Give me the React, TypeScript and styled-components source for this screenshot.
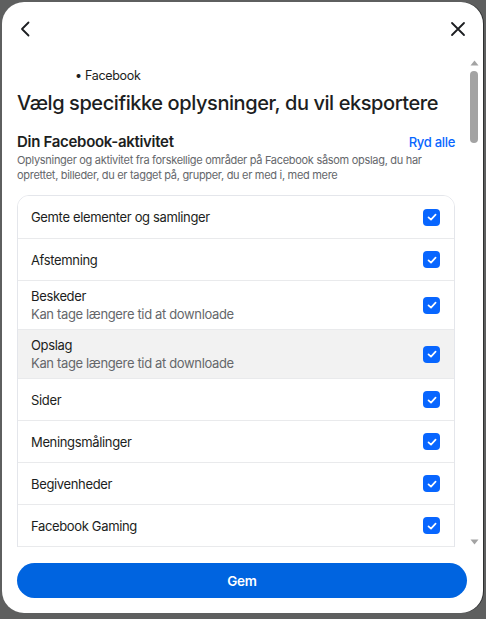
import styled, {createGlobalStyle} from "styled-components";

const GlobalStyle = createGlobalStyle`
  html, body {
    margin: 0;
    padding: 0;
    background: #5e5f5f;
  }
  body {
    font-family: Inter, "Noto Sans", sans-serif;
    -webkit-font-smoothing: antialiased;
  }
`;

type Category = {
  title: string;
  note?: string;
  hovered?: boolean;
};

const CATEGORIES: Category[] = [
  {title: "Gemte elementer og samlinger"},
  {title: "Afstemning"},
  {title: "Beskeder", note: "Kan tage længere tid at downloade"},
  {title: "Opslag", note: "Kan tage længere tid at downloade", hovered: true},
  {title: "Sider"},
  {title: "Meningsmålinger"},
  {title: "Begivenheder"},
  {title: "Facebook Gaming"},
  {title: "Grupper"},
];

function ChevronLeft() {
  return (
    <svg width="20" height="20" viewBox="0 0 20 20" fill="none">
      <path d="M12.5 3.5 6 10l6.5 6.5" stroke="#1c1e21" strokeWidth="1.8" strokeLinecap="round" strokeLinejoin="round"/>
    </svg>
  );
}

function CloseIcon() {
  return (
    <svg width="20" height="20" viewBox="0 0 20 20" fill="none">
      <path d="M4 4l12 12M16 4 4 16" stroke="#1c1e21" strokeWidth="1.8" strokeLinecap="round"/>
    </svg>
  );
}

function CheckMark() {
  return (
    <svg width="12" height="12" viewBox="0 0 12 12" fill="none">
      <path d="M2.5 6.3 5 8.6l4.6-5" stroke="#fff" strokeWidth="1.7" strokeLinecap="round" strokeLinejoin="round"/>
    </svg>
  );
}

function RailArrow({down}: { down?: boolean }) {
  return (
    <svg width="9" height="6" viewBox="0 0 9 6">
      <path d={down ? "M0.5 0.5h8L4.5 5.5z" : "M0.5 5.5h8L4.5 0.5z"} fill="#a3a3a3"/>
    </svg>
  );
}

export default function App() {
  return (
    <>
      <GlobalStyle/>
      <Screen>
        <Dialog>
          <Header>
            <IconButton aria-label="Tilbage"><ChevronLeft/></IconButton>
            <IconButton aria-label="Luk"><CloseIcon/></IconButton>
          </Header>
          <ScrollArea>
            <Body>
              <Crumb>• Facebook</Crumb>
              <Title>Vælg specifikke oplysninger, du vil eksportere</Title>
              <SectionHead>
                <SectionTitle>Din Facebook-aktivitet</SectionTitle>
                <ClearLink>Ryd alle</ClearLink>
              </SectionHead>
              <SectionText>
                Oplysninger og aktivitet fra forskellige områder på Facebook såsom opslag, du har
                oprettet, billeder, du er tagget på, grupper, du er med i, med mere
              </SectionText>
              <Card>
                {CATEGORIES.map((item) =>
                  <Row key={item.title} $hovered={item.hovered}>
                    <RowText>
                      <RowTitle>{item.title}</RowTitle>
                      {item.note && <RowNote>{item.note}</RowNote>}
                    </RowText>
                    <Checkbox><CheckMark/></Checkbox>
                  </Row>
                )}
              </Card>
            </Body>
            <Rail>
              <RailArrow/>
              <RailTrack>
                <RailThumb/>
              </RailTrack>
              <RailArrow down/>
            </Rail>
          </ScrollArea>
          <Footer>
            <SaveButton>Gem</SaveButton>
          </Footer>
        </Dialog>
      </Screen>
    </>
  );
}

const Screen = styled.div`
  width: 486px;
  height: 619px;
  padding: 2px 3px 6px 2px;
  box-sizing: border-box;
  display: flex;
`;

const Dialog = styled.div`
  flex: 1;
  min-height: 0;
  background: #fff;
  border-radius: 22px;
  display: flex;
  flex-direction: column;
  overflow: hidden;
  box-shadow: 1px 0 0 #2e2f30;
`;

const Header = styled.div`
  height: 54px;
  flex-shrink: 0;
  display: flex;
  justify-content: space-between;
  align-items: center;
  padding: 0 13px 0 12px;
`;

const IconButton = styled.button`
  width: 24px;
  height: 24px;
  border: none;
  background: none;
  padding: 0;
  display: flex;
  align-items: center;
  justify-content: center;
`;

const ScrollArea = styled.div`
  flex: 1;
  min-height: 0;
  display: flex;
`;

const Body = styled.div`
  flex: 1;
  overflow-y: auto;
  padding: 12px 13px 0 15px;
  scrollbar-width: none;

  &::-webkit-scrollbar {
    display: none;
  }
`;

const Rail = styled.div`
  width: 12px;
  flex-shrink: 0;
  display: flex;
  flex-direction: column;
  align-items: center;
  padding: 4px 3px 2px 0;
  gap: 5px;
`;

const RailTrack = styled.div`
  flex: 1;
  width: 8px;
`;

const RailThumb = styled.div`
  width: 8px;
  height: 72px;
  border-radius: 4px;
  background: #a3a3a3;
`;

const Crumb = styled.div`
  padding-left: 58px;
  font-size: 12.5px;
  line-height: 16px;
  letter-spacing: -0.3px;
  color: #1c1e21;
`;

const Title = styled.h1`
  margin: 6px 0 0;
  font-size: 20px;
  line-height: 26px;
  font-weight: 500;
  color: #1c1e21;
  letter-spacing: -0.42px;
`;

const SectionHead = styled.div`
  margin-top: 16px;
  display: flex;
  justify-content: space-between;
  align-items: center;
`;

const SectionTitle = styled.h2`
  margin: 0;
  font-size: 15px;
  line-height: 20px;
  font-weight: 600;
  letter-spacing: -0.3px;
  color: #1c1e21;
`;

const ClearLink = styled.a`
  font-size: 13px;
  font-weight: 500;
  letter-spacing: -0.3px;
  color: #0866ff;
  cursor: pointer;
`;

const SectionText = styled.p`
  margin: 1px 0 0;
  font-size: 11px;
  line-height: 15px;
  letter-spacing: -0.3px;
  color: #65676b;
`;

const Card = styled.div`
  margin: 12px 0 0;
  border: 1px solid #e4e6eb;
  border-radius: 12px;
  overflow: hidden;
`;

const Row = styled.div<{ $hovered?: boolean }>`
  display: flex;
  align-items: center;
  justify-content: space-between;
  min-height: 42px;
  padding: 6px 14px 6px 13px;
  box-sizing: border-box;
  background: ${(p) => (p.$hovered ? "#f2f2f2" : "#fff")};
  border-top: 1px solid #e9eaec;

  &:first-child {
    border-top: none;
  }
`;

const RowText = styled.div`
  display: flex;
  flex-direction: column;
  line-height: 18px;
`;

const RowTitle = styled.span`
  font-size: 13px;
  letter-spacing: -0.35px;
  color: #1c1e21;
`;

const RowNote = styled.span`
  font-size: 13px;
  letter-spacing: -0.35px;
  color: #65676b;
`;

const Checkbox = styled.span`
  width: 17px;
  height: 17px;
  border-radius: 4px;
  background: #0866ff;
  display: flex;
  align-items: center;
  justify-content: center;
  flex-shrink: 0;
`;

const Footer = styled.div`
  flex-shrink: 0;
  padding: 16px 16px 15px 15px;
`;

const SaveButton = styled.button`
  width: 100%;
  height: 35px;
  border: none;
  border-radius: 18px;
  background: #0064e0;
  color: #fff;
  font-family: Inter, "Noto Sans", sans-serif;
  font-size: 13.5px;
  font-weight: 600;
  letter-spacing: -0.2px;
`;
